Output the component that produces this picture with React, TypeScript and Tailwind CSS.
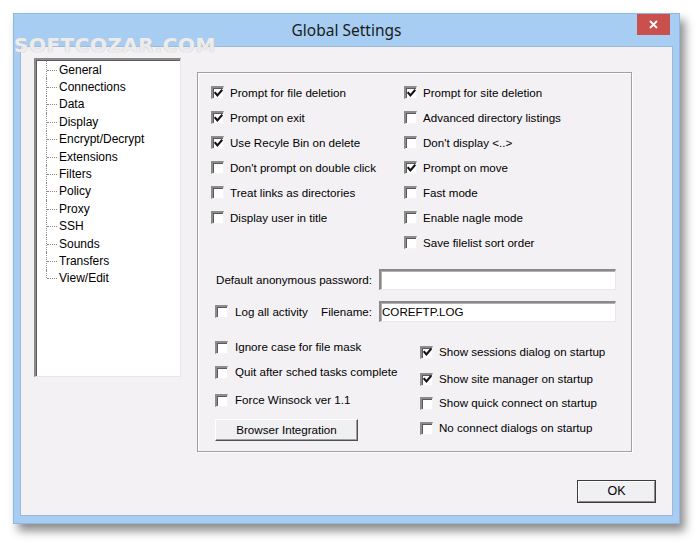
import React from "react";

const FONT = { fontFamily: '"Liberation Sans", Arial, sans-serif' };

function Box({ checked }: { checked?: boolean }) {
  return (
    <span className="relative inline-flex w-[13px] h-[13px] shrink-0 items-center justify-center bg-white border-t-2 border-l-2 border-b border-r border-t-[#8c8c8c] border-l-[#8c8c8c] border-b-[#f4f4f4] border-r-[#f4f4f4] shadow-[inset_1px_1px_0_#5a5a5a]">
      {checked && (
        <svg width="9" height="9" viewBox="0 0 9 9" className="block">
          <polyline points="1.3,4 3.4,6.4 7.6,1.6" fill="none" stroke="#111" strokeWidth="2.1" strokeLinecap="square" />
        </svg>
      )}
    </span>
  );
}

function Check({ label, checked, gap = "gap-[6px]", className = "" }: { label: string; checked?: boolean; gap?: string; className?: string }) {
  return (
    <div className={`flex items-center ${gap} ${className}`}>
      <Box checked={checked} />
      <span className="whitespace-nowrap leading-none">{label}</span>
    </div>
  );
}

const tree = [
  "General",
  "Connections",
  "Data",
  "Display",
  "Encrypt/Decrypt",
  "Extensions",
  "Filters",
  "Policy",
  "Proxy",
  "SSH",
  "Sounds",
  "Transfers",
  "View/Edit",
];

const leftTop: [string, boolean][] = [
  ["Prompt for file deletion", true],
  ["Prompt on exit", true],
  ["Use Recyle Bin on delete", true],
  ["Don't prompt on double click", false],
  ["Treat links as directories", false],
  ["Display user in title", false],
];
const rightTop: [string, boolean][] = [
  ["Prompt for site deletion", true],
  ["Advanced directory listings", false],
  ["Don't display <..>", false],
  ["Prompt on move", true],
  ["Fast mode", false],
  ["Enable nagle mode", false],
  ["Save filelist sort order", false],
];

function Input({ value }: { value?: string }) {
  return (
    <div className="w-[237px] h-[21px] bg-white border-t-2 border-l-2 border-b border-r border-t-[#8a8a8a] border-l-[#8a8a8a] border-b-[#e8e8e8] border-r-[#e8e8e8] shadow-[inset_1px_1px_0_#b0b0b0] flex items-center pl-[1px] leading-none">
      {value}
    </div>
  );
}

export default function App() {
  return (
    <div className="relative w-[700px] h-[547px] bg-white overflow-hidden text-[11.6px] text-black" style={FONT}>
      <div className="pl-[13px] pt-[13px]">
        <div className="w-[667px] h-[511px] bg-[#a7cdf3] border border-[#90b8e2] flex flex-col shadow-[5px_7px_9px_rgba(0,0,0,0.45)]">
          {/* title bar */}
          <div className="relative h-[32px] flex items-center justify-center shrink-0">
            <span className="text-[15.5px] text-[#1b1b1b] mt-[1px]" style={{ fontFamily: '"Noto Sans", "Open Sans", sans-serif' }}>
              Global Settings
            </span>
            <div className="absolute right-[9px] top-0 w-[33px] h-[21px] bg-[#c9504c] flex items-center justify-center">
              <svg width="9" height="9" viewBox="0 0 9 9">
                <path d="M1 1 L8 8 M8 1 L1 8" stroke="white" strokeWidth="1.8" />
              </svg>
            </div>
          </div>
          {/* client */}
          <div className="flex-1 mx-[6px] mb-[7px] bg-[#f3f1f4] border border-[#9db9d8] flex flex-col">
            <div className="flex items-start pl-[13px] pt-[11px]">
              {/* tree */}
              <div className="w-[147px] h-[319px] bg-white border-t-2 border-l-2 border-b border-r border-t-[#8a8a8a] border-l-[#8a8a8a] border-b-[#e6e6e6] border-r-[#e6e6e6] shadow-[inset_1px_1px_0_#5c5c5c] pt-[1px] pl-[10px] text-[12px]">
                {tree.map((t, i) => (
                  <div key={t} className="flex h-[17.4px] items-stretch">
                    <div className="relative w-[12px] shrink-0">
                      <div
                        className={`absolute left-0 top-0 border-l border-dotted border-[#8a8a8a] ${i === tree.length - 1 ? "h-1/2" : "h-full"}`}
                      />
                      <div className="absolute left-[1px] top-1/2 w-[10px] border-t border-dotted border-[#8a8a8a]" />
                    </div>
                    <div className="flex items-center pl-[1px] leading-none whitespace-nowrap">{t}</div>
                  </div>
                ))}
              </div>
              {/* group box */}
              <div className="ml-[16px] mt-[14px] w-[435px] h-[380px] border border-[#a0a0a0] shadow-[inset_1px_1px_0_#ffffff,1px_1px_0_#ffffff] flex flex-col">
                <div className="flex pt-[7px]">
                  <div className="w-[206px] shrink-0 pl-[13px] flex flex-col">
                    {leftTop.map(([l, c]) => (
                      <Check key={l} label={l} checked={c} className="h-[25px]" />
                    ))}
                  </div>
                  <div className="flex flex-col">
                    {rightTop.map(([l, c]) => (
                      <Check key={l} label={l} checked={c} className="h-[25px]" />
                    ))}
                  </div>
                </div>
                <div className="flex items-center mt-[14px]">
                  <div className="w-[174px] text-right leading-none">Default anonymous password:</div>
                  <div className="ml-[7px]">
                    <Input />
                  </div>
                </div>
                <div className="flex items-center mt-[11px]">
                  <div className="w-[174px] flex items-center pl-[17px]">
                    <Check label="Log all activity" gap="gap-[7px]" />
                    <span className="ml-auto leading-none">Filename:</span>
                  </div>
                  <div className="ml-[7px]">
                    <Input value="COREFTP.LOG" />
                  </div>
                </div>
                <div className="flex">
                  <div className="w-[222px] shrink-0 pl-[17px] flex flex-col">
                    <Check label="Ignore case for file mask" gap="gap-[7px]" className="h-[20px] mt-[15px]" />
                    <Check label="Quit after sched tasks complete" gap="gap-[7px]" className="h-[20px] mt-[5px]" />
                    <Check label="Force Winsock ver 1.1" gap="gap-[7px]" className="h-[20px] mt-[8px]" />
                    <div className="mt-[9px] w-[143px] h-[22px] flex items-center justify-center bg-[#f0eff1] border border-t-white border-l-white border-b-[#505050] border-r-[#505050] shadow-[inset_-1px_-1px_0_#a0a0a0] leading-none">
                      Browser Integration
                    </div>
                  </div>
                  <div className="flex flex-col">
                    <Check label="Show sessions dialog on startup" checked gap="gap-[6px]" className="h-[20px] mt-[20px]" />
                    <Check label="Show site manager on startup" checked gap="gap-[6px]" className="h-[20px] mt-[7px]" />
                    <Check label="Show quick connect on startup" gap="gap-[6px]" className="h-[20px] mt-[4px]" />
                    <Check label="No connect dialogs on startup" gap="gap-[6px]" className="h-[20px] mt-[5px]" />
                  </div>
                </div>
              </div>
            </div>
            <div className="self-end mr-[16px] mt-[28px] w-[79px] h-[23px] border border-[#3c3c3c] flex">
              <div className="flex-1 flex items-center justify-center bg-[#f0eff1] border border-t-white border-l-white border-b-[#8a8a8a] border-r-[#8a8a8a] leading-none text-[12.5px]">
                OK
              </div>
            </div>
          </div>
        </div>
      </div>
      {/* watermark overlay */}
      <div
        className="absolute left-[14px] top-[35px] text-[20px] font-bold tracking-[0.5px] text-white/70 [text-shadow:0_0_1px_#c4c4c4,0_0_1px_#c4c4c4] leading-none"
        style={{ fontFamily: '"DejaVu Sans", sans-serif' }}
      >
        SOFTCOZAR.COM
      </div>
    </div>
  );
}
